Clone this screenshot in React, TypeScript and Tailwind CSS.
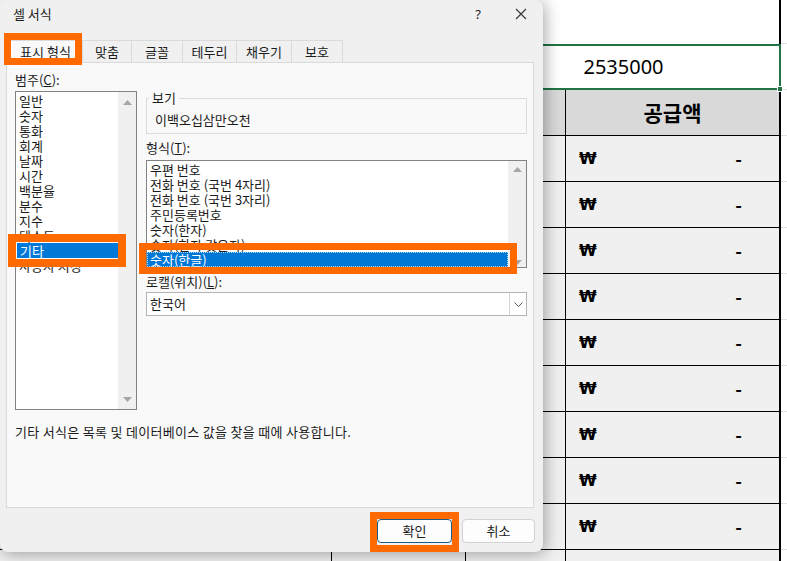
import React from "react";

const FONT = "font-['Noto_Sans_CJK_KR','Noto_Sans',sans-serif]";

const TABS = [
  { label: "표시 형식", w: "w-[75px]", active: true },
  { label: "맞춤", w: "w-[49px]" },
  { label: "글꼴", w: "w-[51px]" },
  { label: "테두리", w: "w-[54px]" },
  { label: "채우기", w: "w-[55px]" },
  { label: "보호", w: "w-[51px]" },
];

const CATEGORIES = ["일반", "숫자", "통화", "회계", "날짜", "시간", "백분율", "분수", "지수", "텍스트", "기타", "사용자 지정"];

const FORMATS = [
  "우편 번호",
  "전화 번호 (국번 4자리)",
  "전화 번호 (국번 3자리)",
  "주민등록번호",
  "숫자(한자)",
  "숫자(한자 갖은자)",
  "숫자(한글)",
];

function Arrow({ up }: { up?: boolean }) {
  return (
    <svg width="9" height="5" viewBox="0 0 9 5">
      <path d={up ? "M0 5L4.5 0L9 5Z" : "M0 0L4.5 5L9 0Z"} fill="#a6a6a6" />
    </svg>
  );
}

// vertical scrollbar strip used by both list boxes
function ScrollStrip({ top, bottom }: { top: string; bottom: string }) {
  return (
    <div className={`flex w-[18px] flex-col items-center justify-between bg-[#f0f0f0] ${top} ${bottom}`}>
      <Arrow up />
      <Arrow />
    </div>
  );
}

function Sheet() {
  const dataRows = Array.from({ length: 10 }, (_, i) => i);
  return (
    <div className="flex flex-col text-black">
      <div className="flex h-[44px] shrink-0">
        <div className="w-[781px] border-r-2 border-black bg-white" />
        <div className="flex-1 border-b border-[#e1e1e1]" />
      </div>

      <div className="flex h-[46px] shrink-0">
        <div className="w-[466px] bg-white" />
        <div className="relative flex w-[315px] items-center justify-center border-2 border-[#217346] bg-white font-['Noto_Sans',sans-serif] text-[20px]">
          2535000
          <span className="absolute -bottom-[4px] -right-[4px] h-[6px] w-[6px] border border-white bg-[#217346]" />
        </div>
        <div className="flex-1 border-b border-[#e1e1e1]" />
      </div>

      <div className="flex h-[46px] shrink-0">
        <div className="w-[332px] border-b border-r border-black bg-[#d9d9d9]" />
        <div className="w-[134px] border-b border-r border-black bg-[#d9d9d9]" />
        <div className="w-[100px] border-b border-r border-black bg-[#d9d9d9]" />
        <div className="flex w-[215px] items-center justify-center border-b border-r-2 border-black bg-[#d9d9d9] text-[21px] font-bold">
          공급액
        </div>
        <div className="flex-1 border-b border-[#e1e1e1]" />
      </div>

      {dataRows.map((i) => (
        <div key={i} className="flex h-[46px] shrink-0">
          <div className="w-[332px] border-b border-r border-black bg-[#f0f0f0]" />
          <div className="w-[134px] border-b border-r border-black bg-[#f0f0f0]" />
          <div className="w-[100px] border-b border-r border-black bg-[#f0f0f0]" />
          <div className="flex w-[215px] items-center justify-between border-b border-r-2 border-black bg-[#f0f0f0] pl-[13px] pr-[37px] text-[18px] font-bold">
            <span className="font-['DejaVu_Sans',sans-serif] text-[16px]">₩</span>
            <span>-</span>
          </div>
          <div className="flex-1 border-b border-[#e1e1e1]" />
        </div>
      ))}
    </div>
  );
}

function FormatDialog() {
  return (
    <div className="absolute left-0 top-0 flex h-[552px] w-[543px] flex-col rounded-lg bg-[#f0f0f0] text-[13px] leading-[16px] text-[#1b1b1b] shadow-[2px_2px_16px_rgba(0,0,0,0.35)]">
      {/* title bar */}
      <div className="flex h-[27px] items-center justify-between pl-[13px] pr-[16px]">
        <span>셀 서식</span>
        <div className="flex items-center gap-[34px]">
          <span className="font-['Noto_Sans',sans-serif]">?</span>
          <svg width="12" height="12" viewBox="0 0 12 12">
            <path d="M1 1L11 11M11 1L1 11" stroke="#333" strokeWidth="1.1" />
          </svg>
        </div>
      </div>

      {/* tabs */}
      <div className="mt-[13px] flex h-[22px] pl-[8px]">
        {TABS.map((t, i) => (
          <div
            key={t.label}
            className={`flex items-center justify-center border-r border-t border-[#dadada] ${t.w} ${i === 0 ? "border-l" : ""} ${
              t.active ? "bg-[#f9f9f9]" : "bg-[#f0f0f0]"
            }`}
          >
            {t.label}
          </div>
        ))}
      </div>

      {/* tab page */}
      <div className="ml-[6px] flex h-[446px] w-[528px] flex-col border border-[#dadada] bg-[#f9f9f9]">
        <div className="flex gap-[9px] pl-[8px]">
          <div className="flex w-[122px] flex-col pt-[9px]">
            <span>
              범주(<u>C</u>):
            </span>
            <div className="mt-[3px] flex h-[319px] border border-[#828282] bg-white">
              <ul className="flex-1 pt-[1px]">
                {CATEGORIES.map((c) => (
                  <li
                    key={c}
                    className={`h-[15px] pl-[3px] leading-[15px] ${c === "기타" ? "ml-[1px] bg-[#0078d7] text-white" : ""}`}
                  >
                    {c}
                  </li>
                ))}
              </ul>
              <ScrollStrip top="pt-[8px]" bottom="pb-[7px]" />
            </div>
          </div>

          <div className="flex w-[381px] flex-col pt-[27px]">
            <fieldset className="border border-[#dcdcdc] pb-[5px] pl-[2px] pt-[6px]">
              <legend className="px-[3px] leading-[16px]">보기</legend>
              <span className="ml-[6px]">이백오십삼만오천</span>
            </fieldset>

            <span className="mt-[6px]">
              형식(<u>T</u>):
            </span>
            <div className="mt-[4px] flex h-[108px] border border-[#828282] bg-white">
              <ul className="flex-1 pt-[1px]">
                {FORMATS.map((f) => (
                  <li
                    key={f}
                    className={`h-[15px] pl-[3px] leading-[15px] ${
                      f === "숫자(한글)" ? "bg-[#0078d7] text-white outline outline-1 -outline-offset-1 outline-dotted outline-[#bcd9f5]" : ""
                    }`}
                  >
                    {f}
                  </li>
                ))}
              </ul>
              <ScrollStrip top="pt-[6px]" bottom="pb-[2px]" />
            </div>

            <span className="mt-[6px]">
              로캘(위치)(<u>L</u>):
            </span>
            <div className="mt-[2px] flex h-[24px] border border-[#b4b4b4] bg-white">
              <span className="flex flex-1 items-center pl-[3px]">한국어</span>
              <div className="flex w-[17px] items-center justify-center border-l border-[#d4d4d4]">
                <svg width="9" height="5" viewBox="0 0 9 5">
                  <path d="M0.5 0.5L4.5 4.5L8.5 0.5" fill="none" stroke="#555" strokeWidth="1" />
                </svg>
              </div>
            </div>
          </div>
        </div>

        <p className="mt-[14px] pl-[8px] tracking-[0.3px]">기타 서식은 목록 및 데이터베이스 값을 찾을 때에 사용합니다.</p>
      </div>

      {/* buttons */}
      <div className="flex justify-end gap-[10px] pr-[8px] pt-[11px]">
        <button className="h-[24px] w-[75px] rounded-[4px] border border-[#1c5b85] bg-[#fdfdfd]">확인</button>
        <button className="h-[24px] w-[73px] rounded-[4px] border border-[#d2d2d2] bg-[#fdfdfd]">취소</button>
      </div>

      {/* annotation boxes drawn on top of the dialog */}
      <div className="pointer-events-none absolute left-[4px] top-[33px] h-[32px] w-[78px] border-[7px] border-[#ff6a00]" />
      <div className="pointer-events-none absolute left-[8px] top-[234px] h-[33px] w-[118px] border-[8px] border-[#ff6a00]" />
      <div className="pointer-events-none absolute left-[139px] top-[243px] h-[31px] w-[378px] border-[7px] border-[#ff6a00]" />
      <div className="pointer-events-none absolute left-[370px] top-[512px] h-[40px] w-[89px] border-[7px] border-[#ff6a00]" />
    </div>
  );
}

export default function App() {
  return (
    <div className={`relative h-[561px] w-[787px] overflow-hidden bg-white ${FONT}`}>
      <Sheet />
      <FormatDialog />
    </div>
  );
}
